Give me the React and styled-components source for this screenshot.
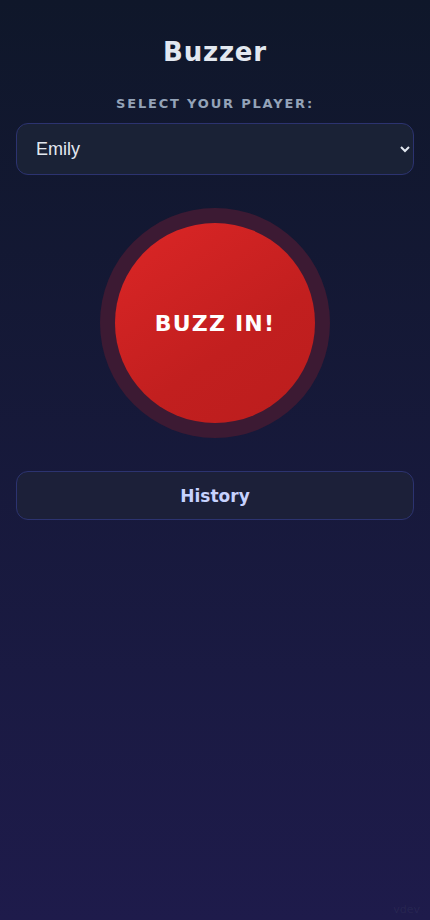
import React, { useState } from 'react'
import styled, { createGlobalStyle } from 'styled-components'

const GlobalStyle = createGlobalStyle`
  html, body {
    margin: 0;
    padding: 0;
    height: 100%;
  }
  body {
    font-family: 'DejaVu Sans', sans-serif;
    background: linear-gradient(180deg, #0f172a 0%, #1e1b4b 100%);
    min-height: 100vh;
  }
  #root {
    min-height: 100vh;
  }
`

const players = ['Emily', 'Jacob', 'Sophia', 'Liam']

export default function App() {
  const [player, setPlayer] = useState('Emily')

  return (
    <>
      <GlobalStyle />
      <Page>
        <Title>Buzzer</Title>
        <Label htmlFor="player">Select your player:</Label>
        <Select id="player" value={player} onChange={e => setPlayer(e.target.value)}>
          {players.map(p => <option key={p} value={p}>{p}</option>)}
        </Select>
        <ButtonWrap>
          <Ring>
            <BuzzButton>BUZZ IN!</BuzzButton>
          </Ring>
        </ButtonWrap>
        <HistoryButton>History</HistoryButton>
        <Footer>vdev</Footer>
      </Page>
    </>
  )
}

const Page = styled.div`
  position: relative;
  min-height: 100vh;
  box-sizing: border-box;
  padding: 35px 16px 0;
  display: flex;
  flex-direction: column;
  align-items: stretch;
`

const Title = styled.h1`
  margin: 0;
  text-align: center;
  font-size: 26px;
  line-height: 34px;
  font-weight: 700;
  letter-spacing: 0.8px;
  color: #e2e8f0;
`

const Label = styled.label`
  margin-top: 27px;
  text-align: center;
  font-size: 13px;
  line-height: 16px;
  font-weight: 700;
  letter-spacing: 1.8px;
  text-transform: uppercase;
  color: #94a3b8;
`

const Select = styled.select`
  margin-top: 11px;
  height: 52px;
  width: 100%;
  box-sizing: border-box;
  padding: 0 12px 0 15px;
  border: 1px solid #2c3370;
  border-radius: 12px;
  background: #1a2236;
  color: #e2e8f0;
  font-family: 'Liberation Sans', Arial, sans-serif;
  font-size: 18px;
  outline: none;
`

const ButtonWrap = styled.div`
  margin-top: 33px;
  display: flex;
  justify-content: center;
`

const Ring = styled.div`
  width: 230px;
  height: 230px;
  border-radius: 50%;
  background: #3c1a33;
  display: flex;
  align-items: center;
  justify-content: center;
`

const BuzzButton = styled.button`
  width: 200px;
  height: 200px;
  padding: 0;
  border-radius: 50%;
  border: none;
  background: linear-gradient(145deg, #dc2626 0%, #c21f1f 60%, #bb1d1d 100%);
  color: #ffffff;
  font-family: 'DejaVu Sans', sans-serif;
  font-size: 22px;
  font-weight: 700;
  letter-spacing: 1.2px;
  cursor: pointer;
`

const HistoryButton = styled.button`
  margin-top: 33px;
  height: 49px;
  width: 100%;
  border: 1px solid #2c3370;
  border-radius: 12px;
  background: #1c2039;
  color: #c7d2fe;
  font-family: 'DejaVu Sans', sans-serif;
  font-size: 17px;
  font-weight: 700;
  cursor: pointer;
`

const Footer = styled.div`
  position: absolute;
  right: 10px;
  bottom: 4px;
  font-size: 11px;
  color: rgba(255, 255, 255, 0.06);
`
